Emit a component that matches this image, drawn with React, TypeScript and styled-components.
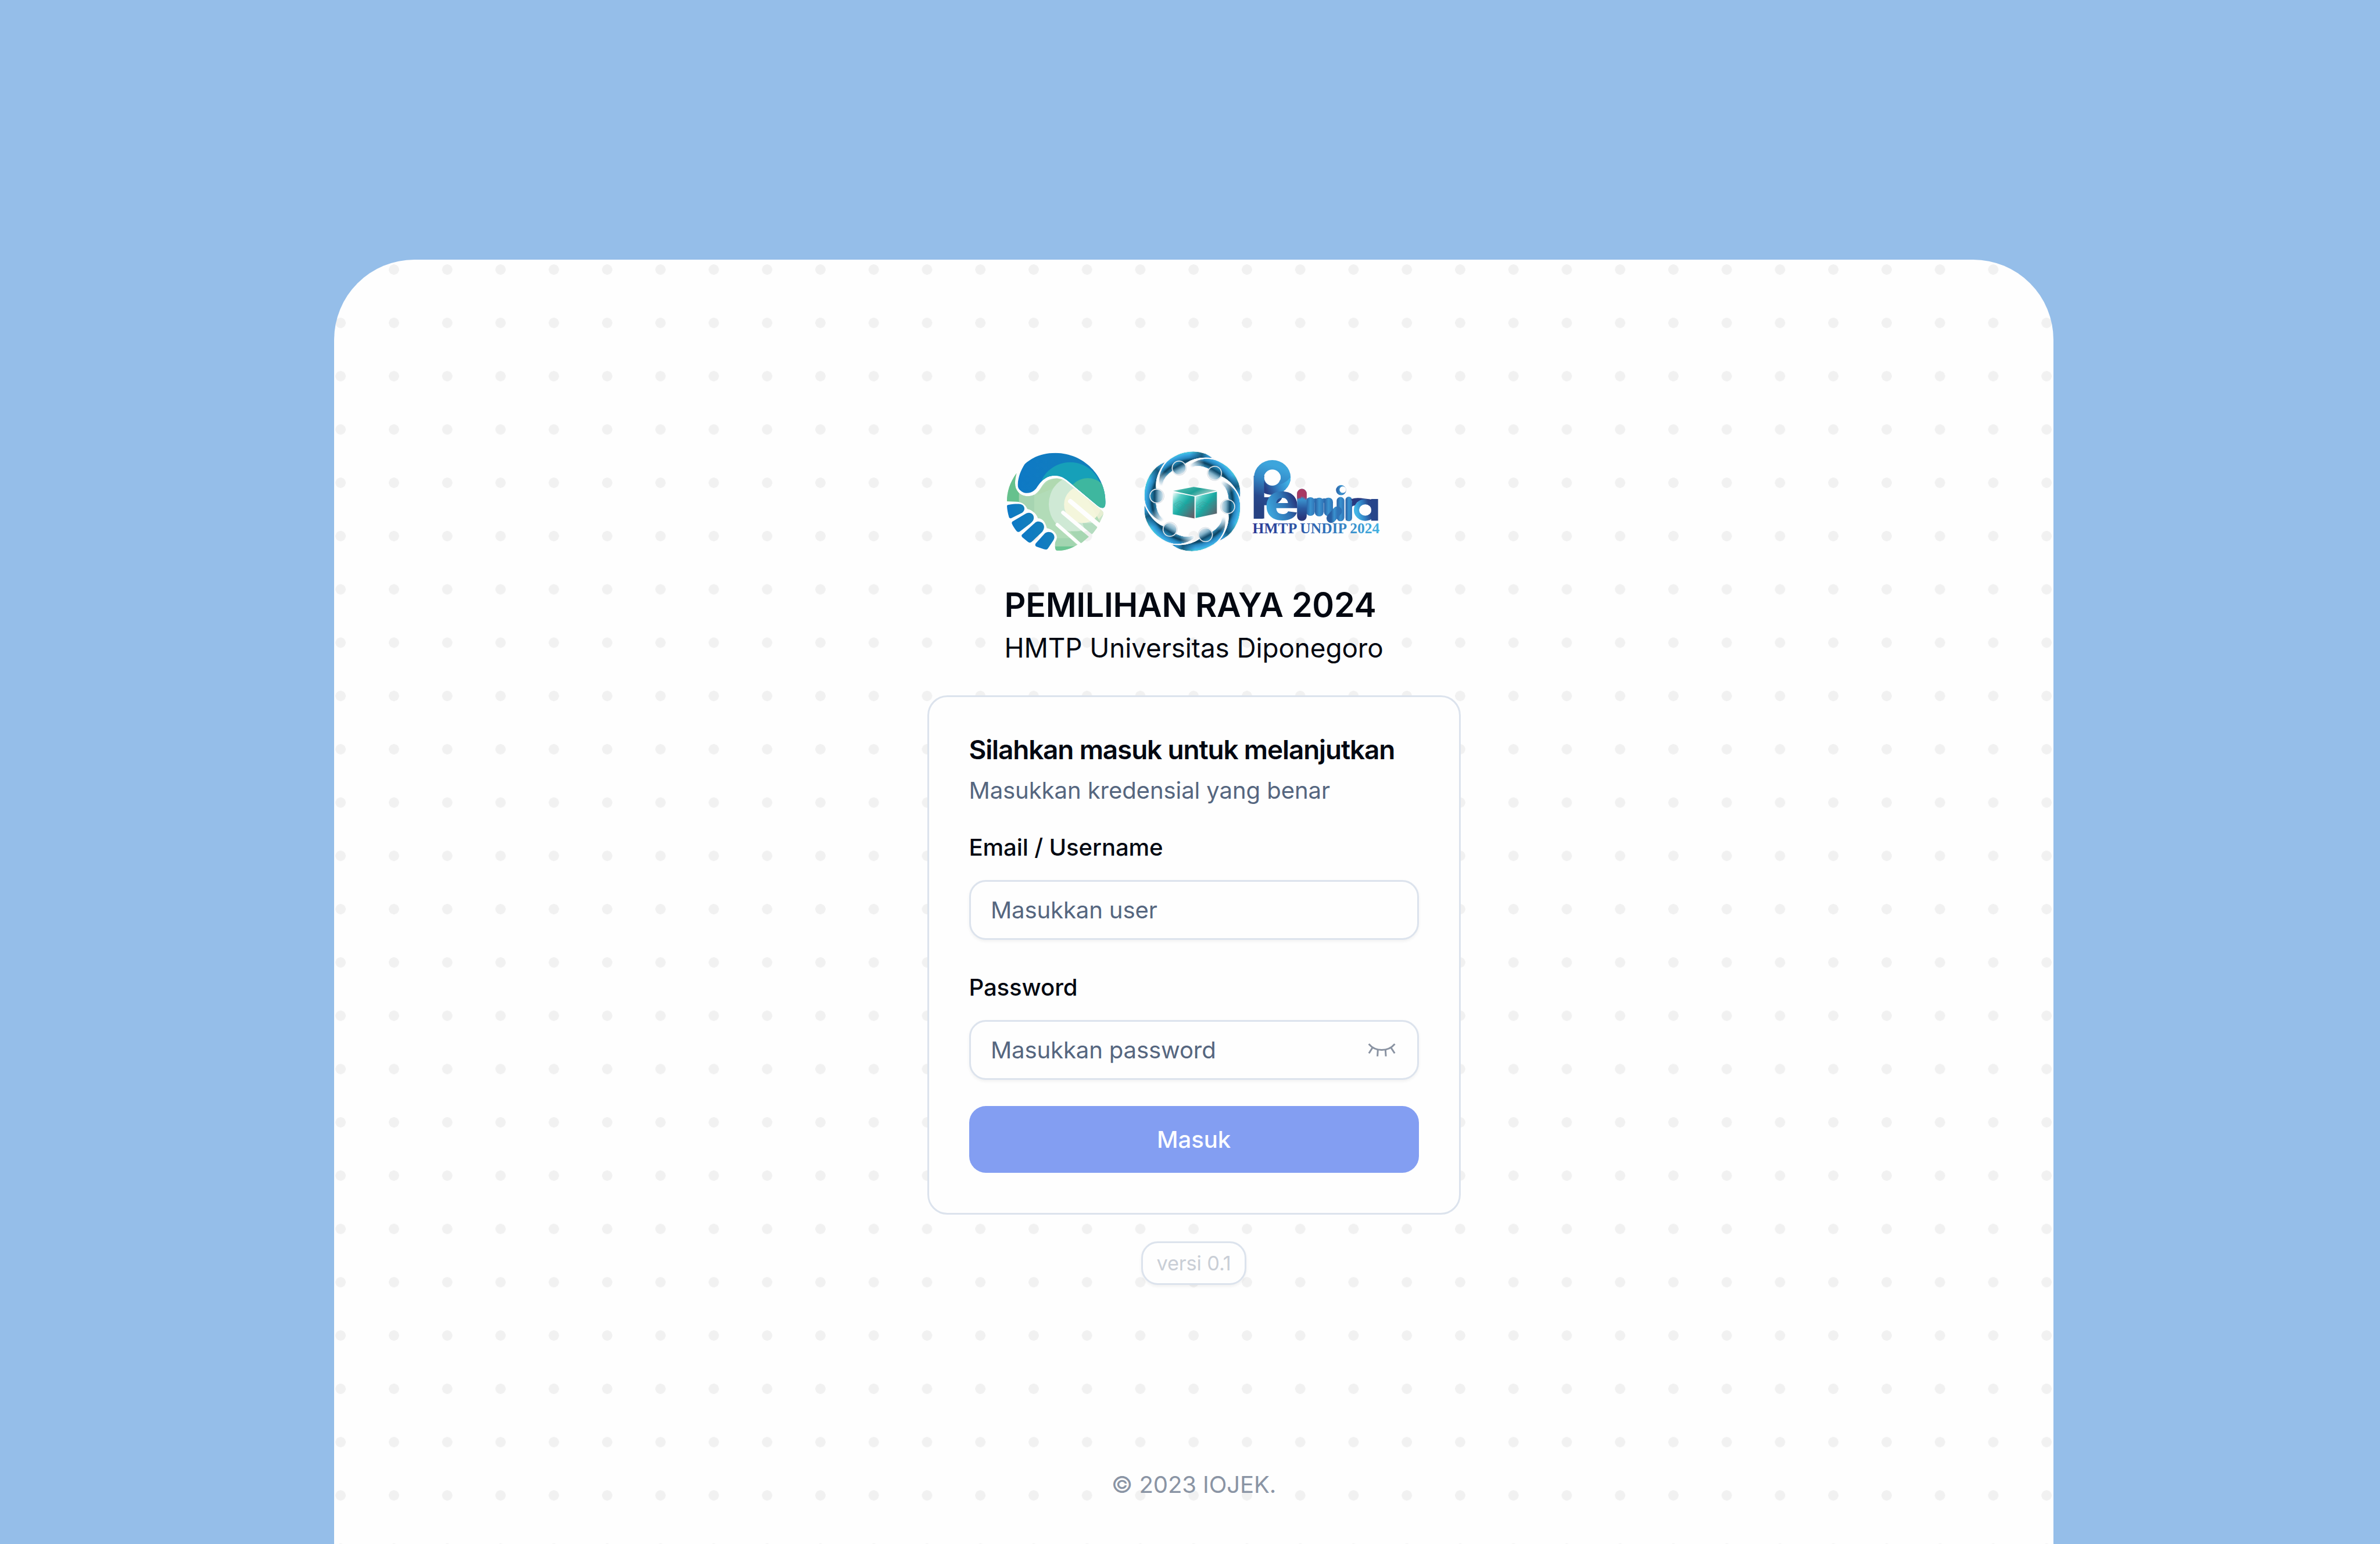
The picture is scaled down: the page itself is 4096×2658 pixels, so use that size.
import React from "react";
import styled, { createGlobalStyle } from "styled-components";

const sans = `Inter, "Noto Sans", "Liberation Sans", sans-serif`;

const GlobalStyle = createGlobalStyle`
  *, *::before, *::after { box-sizing: border-box; }
  html, body { margin: 0; padding: 0; }
  body {
    background: #95bee9;
    font-family: ${sans};
    color: #030811;
    overflow: hidden;
  }
`;

const Page = styled.div`
  height: 100vh;
  padding: 447px 0 0 575px;
  background: #95bee9;
  overflow: hidden;
`;

const Panel = styled.main`
  display: flex;
  flex-direction: column;
  align-items: center;
  width: 2959px;
  height: 100%;
  padding-top: 328px;
  border-radius: 138px 138px 0 0;
  background-color: #fefefe;
  background-image: radial-gradient(circle, #f1f1f1 8.5px, rgba(241, 241, 241, 0) 9px);
  background-size: 91.755px 91.755px;
  background-position: -34.7px -28.8px;
`;

const LogoRow = styled.div`
  display: flex;
  gap: 59px;
  height: 176.3px;
`;

const Mark = styled.svg<{ $w: number }>`
  display: block;
  width: ${(p) => p.$w}px;
  height: 176.3px;
  overflow: visible;
`;

const Heading = styled.header`
  display: flex;
  flex-direction: column;
  width: 652px;
  margin-top: 50px;
`;

const Title = styled.h1`
  margin: 0;
  font-size: 57.35px;
  line-height: 80px;
  font-weight: 600;
  letter-spacing: -0.28px;
  white-space: nowrap;
`;

const Subtitle = styled.p`
  margin: 0;
  font-size: 45.88px;
  line-height: 69px;
  letter-spacing: -0.12px;
  white-space: nowrap;
`;

const Card = styled.section`
  display: flex;
  flex-direction: column;
  width: 918px;
  height: 894px;
  margin-top: 47px;
  padding: 68px 69px;
  border: 3px solid #dce3ed;
  border-radius: 34.4px;
  background: #fefefe;
`;

const CardTitle = styled.h2`
  margin: 0;
  font-size: 45.88px;
  line-height: 46px;
  font-weight: 600;
  letter-spacing: -1.13px;
  white-space: nowrap;
`;

const CardText = styled.p`
  margin: 18px 0 0;
  font-size: 40.14px;
  line-height: 57px;
  letter-spacing: -0.12px;
  color: #55667f;
`;

const Field = styled.div<{ $gap: number }>`
  display: flex;
  flex-direction: column;
  gap: 36px;
  margin-top: ${(p) => p.$gap}px;
`;

const Label = styled.label`
  font-size: 40.14px;
  line-height: 40px;
  font-weight: 500;
  letter-spacing: -0.13px;
`;

const InputBox = styled.div`
  display: flex;
  align-items: center;
  justify-content: space-between;
  height: 103px;
  padding: 0 37.4px 0 34.5px;
  border: 3px solid #dce3ed;
  border-radius: 28.7px;
  background: #fefefe;
  box-shadow: 0 2.9px 5.7px rgba(0, 0, 0, 0.05);
`;

const Input = styled.input`
  flex: 1;
  min-width: 0;
  padding: 0;
  border: 0;
  outline: 0;
  background: transparent;
  font-family: ${sans};
  font-size: 40.14px;
  line-height: 57px;
  letter-spacing: -0.16px;
  color: #030811;
  &::placeholder {
    color: #55667f;
    opacity: 1;
  }
`;

const EyeToggle = styled.button`
  display: flex;
  padding: 0;
  border: 0;
  background: transparent;
  color: #8a93a2;
`;

const Submit = styled.button`
  height: 115px;
  margin-top: 45px;
  padding: 0;
  border: 0;
  border-radius: 28.7px;
  background: #839ef2;
  color: #fcfdff;
  font-family: ${sans};
  font-size: 40.14px;
  font-weight: 500;
  letter-spacing: -0.1px;
`;

const Version = styled.div`
  display: flex;
  align-items: center;
  justify-content: center;
  width: 181px;
  height: 75px;
  margin-top: 46px;
  border: 3px solid #dce3ed;
  border-radius: 28.7px;
  background: #fefefe;
  box-shadow: 0 2.9px 5.7px rgba(0, 0, 0, 0.05);
  color: #c9ced6;
  font-size: 34.4px;
  letter-spacing: -0.15px;
  white-space: nowrap;
`;

const Footer = styled.footer`
  margin-top: 315px;
  font-size: 40.14px;
  line-height: 57px;
  letter-spacing: -0.15px;
  color: #8a94a4;
  white-space: nowrap;
`;

function HandshakeMark() {
  return (
    <Mark $w={170.4} viewBox="180 95 720 745">
      <defs>
        <clipPath id="hs-top">
          <path d="M310 195C370 140 450 114 535 115C740 118 895 280 897 470C897 500 890 514 876 515C862 516 850 508 840 500L615 312C580 283 540 272 490 285C440 300 415 340 395 370C370 405 325 415 295 400C270 385 258 370 258 345C262 290 280 240 310 195Z" />
        </clipPath>
        <clipPath id="hs-hand">
          <path d="M250 262C233 330 235 370 262 400C290 432 345 440 385 415C430 385 430 340 480 313C530 290 580 300 610 325L874 538C884 548 882 558 876 574L860 608L832 664L806 698L765 733L725 767L682 788C640 815 590 828 545 825C528 823 530 800 530 775C532 755 543 750 543 730C543 695 505 668 470 662C460 620 440 590 405 590C390 550 360 530 328 522C315 490 290 470 240 469L180 467C180 400 200 330 250 262Z" />
        </clipPath>
        <mask id="hs-slots" maskUnits="userSpaceOnUse" x="150" y="90" width="780" height="770">
          <rect x="150" y="90" width="780" height="770" fill="#fff" />
          <g stroke="#000" strokeLinecap="round" fill="none">
            <path d="M641 467L880 668" strokeWidth="34" />
            <path d="M588 549L810 735" strokeWidth="28" />
            <path d="M546 637L730 798" strokeWidth="25" />
          </g>
        </mask>
        <linearGradient id="hs-blue" x1="0" y1="0" x2="1" y2="0">
          <stop offset="0" stopColor="#0d78c6" />
          <stop offset="1" stopColor="#1480ba" />
        </linearGradient>
      </defs>
      <g clipPath="url(#hs-top)">
        <rect x="180" y="95" width="720" height="430" fill="url(#hs-blue)" />
        <ellipse cx="640" cy="400" rx="226" ry="217" fill="#16a0b9" />
        <ellipse cx="768" cy="448" rx="150" ry="150" fill="#3eb79f" />
      </g>
      <g mask="url(#hs-slots)">
        <g clipPath="url(#hs-hand)">
          <rect x="170" y="250" width="730" height="600" fill="#b2dcb8" />
          <rect x="170" y="250" width="98" height="240" fill="#66c18d" />
          <rect x="268" y="250" width="110" height="300" fill="#a6d4b1" />
          <path d="M400 420C430 360 470 320 540 300L600 310L500 380Z" fill="#b0d9b0" />
          <ellipse cx="665" cy="488" rx="181" ry="200" fill="#cfe9d5" />
          <ellipse cx="730" cy="490" rx="135" ry="135" fill="#f4f6dc" />
          <path d="M700 340L900 500V570L860 620Z" fill="#f2f3da" opacity="0.8" />
          <path d="M845 600L880 560V600L860 620Z" fill="#c5e4c8" />
          <path d="M730 625H850L800 710L740 660Z" fill="#b4dcc0" />
          <path d="M640 685H770L780 740L720 780Z" fill="#a6d6b2" />
          <path d="M520 735H640L700 800H520Z" fill="#a2d5b0" />
          <rect x="520" y="795" width="170" height="40" fill="#6bc592" />
        </g>
      </g>
      <g fill="url(#hs-blue)">
        <path d="M180 502C180 495 184 493 192 492C230 486 260 485 280 488C312 495 316 535 290 550L214 588C203 593 196 589 194 580C186 552 181 525 180 502Z" />
        <path d="M222 613L320 555C350 540 375 560 375 585C375 605 365 615 350 628L275 686C266 693 258 691 250 683C235 665 224 648 216 630C214 622 216 617 222 613Z" />
        <path d="M290 709L385 622C410 603 450 620 450 655C448 675 440 685 430 695L360 762C351 770 341 769 332 762L292 729C285 722 285 715 290 709Z" />
        <path d="M390 772L455 700C475 680 525 688 525 730C523 745 515 755 508 765L480 807C472 819 464 820 450 816L400 799C385 793 382 783 390 772Z" />
      </g>
    </Mark>
  );
}

const RING = [0, 60, 120, 180, 240, 300];

function Glyph(p: { ch: string; x: number; y: number; size: number; sx: number; fill: string }) {
  return (
    <text
      transform={`translate(${p.x} ${p.y}) scale(${p.sx} 1)`}
      fontFamily="Inter, sans-serif"
      fontWeight={800}
      fontSize={p.size}
      fill={p.fill}
    >
      {p.ch}
    </text>
  );
}

function PemiraMark() {
  return (
    <Mark $w={414.2} viewBox="100 95 1750 745">
      <defs>
        <radialGradient id="pm-body" gradientUnits="userSpaceOnUse" cx="10" cy="5" r="372">
          <stop offset="0.62" stopColor="#d3e1e9" />
          <stop offset="0.68" stopColor="#5f9bba" />
          <stop offset="0.75" stopColor="#2b7da6" />
          <stop offset="0.815" stopColor="#0b415f" />
          <stop offset="0.87" stopColor="#2585bd" />
          <stop offset="0.93" stopColor="#38a5e2" />
          <stop offset="1" stopColor="#48d5dc" />
        </radialGradient>
        <linearGradient id="pm-end" gradientUnits="userSpaceOnUse" x1="-20" y1="-345" x2="155" y2="-312">
          <stop offset="0" stopColor="#0b4668" stopOpacity="0" />
          <stop offset="0.5" stopColor="#083a56" stopOpacity="0.7" />
          <stop offset="0.8" stopColor="#2b8fcb" stopOpacity="0.6" />
          <stop offset="1" stopColor="#0c4c72" />
        </linearGradient>
        <linearGradient id="pm-tip" gradientUnits="userSpaceOnUse" x1="-228" y1="-115" x2="-195" y2="-215">
          <stop offset="0" stopColor="#f4f7fa" />
          <stop offset="1" stopColor="#f4f7fa" stopOpacity="0" />
        </linearGradient>
        <linearGradient id="pm-head" gradientUnits="userSpaceOnUse" x1="-125" y1="-290" x2="-70" y2="-190">
          <stop offset="0" stopColor="#2b9ed0" />
          <stop offset="0.35" stopColor="#0f4a6c" />
          <stop offset="0.6" stopColor="#7fb0c8" />
          <stop offset="1" stopColor="#f4f7fa" />
        </linearGradient>
        <linearGradient id="pm-top" x1="0" y1="0" x2="1" y2="0.4">
          <stop offset="0" stopColor="#d5f3ef" />
          <stop offset="0.3" stopColor="#3fb3a6" />
          <stop offset="0.6" stopColor="#1fa097" />
          <stop offset="1" stopColor="#a9cfc9" />
        </linearGradient>
        <linearGradient id="pm-left" x1="0" y1="0" x2="1" y2="1">
          <stop offset="0.02" stopColor="#f2fbfa" />
          <stop offset="0.25" stopColor="#55cdc4" />
          <stop offset="0.5" stopColor="#1aa9a2" />
          <stop offset="0.75" stopColor="#467c80" />
          <stop offset="1" stopColor="#6a5560" />
        </linearGradient>
        <linearGradient id="pm-p" gradientUnits="userSpaceOnUse" x1="1080" y1="210" x2="985" y2="520">
          <stop offset="0" stopColor="#3da5dc" />
          <stop offset="0.35" stopColor="#3386c5" />
          <stop offset="0.75" stopColor="#27498d" />
          <stop offset="1" stopColor="#264282" />
        </linearGradient>
        <linearGradient id="pm-fold" gradientUnits="userSpaceOnUse" x1="1180" y1="330" x2="1020" y2="400">
          <stop offset="0" stopColor="#3fb2e6" />
          <stop offset="0.45" stopColor="#3387c8" />
          <stop offset="1" stopColor="#283f86" />
        </linearGradient>
        <linearGradient id="pm-e" x1="0.1" y1="0.8" x2="0.9" y2="0.25">
          <stop offset="0.1" stopColor="#3da5dc" />
          <stop offset="0.55" stopColor="#2f74b5" />
          <stop offset="0.85" stopColor="#27397f" />
        </linearGradient>
        <linearGradient id="pm-v" x1="0" y1="0" x2="0" y2="1">
          <stop offset="0.35" stopColor="#3b8fcb" />
          <stop offset="0.6" stopColor="#2a5ca3" />
          <stop offset="0.9" stopColor="#29377c" />
        </linearGradient>
        <linearGradient id="pm-h" x1="0" y1="0" x2="1" y2="0">
          <stop offset="0" stopColor="#285fa3" />
          <stop offset="0.5" stopColor="#3a92cf" />
          <stop offset="1" stopColor="#2f73b6" />
        </linearGradient>
        <linearGradient id="pm-a" x1="0" y1="0.6" x2="1" y2="0.4">
          <stop offset="0" stopColor="#43b5e6" />
          <stop offset="0.45" stopColor="#2f78bd" />
          <stop offset="0.75" stopColor="#28478c" />
        </linearGradient>
        <linearGradient id="pm-cap" gradientUnits="userSpaceOnUse" x1="918" y1="0" x2="1842" y2="0">
          <stop offset="0" stopColor="#2b3a94" />
          <stop offset="0.35" stopColor="#2c55a6" />
          <stop offset="0.7" stopColor="#3583c4" />
          <stop offset="1" stopColor="#43b2e2" />
        </linearGradient>
        <clipPath id="pm-bowlclip">
          <ellipse cx="1062" cy="293" rx="133" ry="126" />
        </clipPath>
      </defs>

      <g transform="translate(480 467)">
        {RING.map((a) => (
          <g key={a} transform={`rotate(${a})`}>
            {["url(#pm-body)", "url(#pm-end)", "url(#pm-tip)"].map((fill) => (
              <path
                key={fill}
                d="M-242 -130C-250 -200 -219 -285 -130 -330C-50 -375 70 -385 155 -312C70 -322 5 -312 -45 -275C-75 -250 -110 -235 -140 -222C-180 -195 -206 -165 -214 -128C-218 -110 -239 -112 -242 -130Z"
                fill={fill}
                stroke="#f6f8fa"
                strokeWidth="5"
              />
            ))}
            <circle cx="-96" cy="-243" r="50" fill="url(#pm-head)" stroke="#f3f3f5" strokeWidth="6" />
            <circle cx="-96" cy="-243" r="54" fill="none" stroke="#9fb3c0" strokeWidth="1.5" />
          </g>
        ))}
      </g>

      <path d="M340 391L490 362L658 389L500 427Z" fill="url(#pm-top)" />
      <path d="M338 401L496 432V592L338 561Z" fill="url(#pm-left)" />
      <path d="M504 432L659 397V556L504 588Z" fill="url(#pm-left)" />
      <g fill="none" stroke="#4f7f82" strokeWidth="3" opacity="0.55">
        <path d="M345 490L390 465L430 495L490 480M345 495L395 530L430 500L490 515M365 495L390 480L412 498L390 515Z" />
        <path d="M512 500L555 470L600 490L655 465M512 520L560 528L600 498L655 495M530 505L555 485L580 498L556 515Z" />
      </g>

      <Glyph ch="P" x={905} y={592} size={430} sx={0.9} fill="#27498d" />
      <rect x="928" y="290" width="75" height="302" fill="url(#pm-p)" />
      <ellipse cx="1062" cy="293" rx="97" ry="90" fill="none" stroke="url(#pm-p)" strokeWidth="72" />
      <g clipPath="url(#pm-bowlclip)">
        <path d="M1002 315C1020 350 1060 365 1090 352C1140 340 1185 320 1200 275V430H1002Z" fill="url(#pm-fold)" />
      </g>
      <circle cx="1062" cy="294" r="59" fill="#fefefe" />

      <Glyph ch="e" x={1005} y={602} size={376} sx={1.12} fill="url(#pm-e)" />

      <Glyph ch="m" x={1300} y={560} size={205} sx={1} fill="#2f73b6" />
      <rect x="1307" y="437" width="64" height="136" rx="31" fill="url(#pm-h)" />
      <rect x="1371" y="440" width="64" height="137" rx="31" fill="url(#pm-h)" />
      <rect x="1437" y="440" width="66" height="134" rx="32" fill="url(#pm-h)" />
      <rect x="1242" y="376" width="70" height="234" rx="35" fill="url(#pm-v)" />
      <path d="M1242 456V411A35 35 0 0 1 1312 411V445L1304 458L1299 436L1292 452L1286 430L1278 446L1272 430L1266 450L1258 440L1252 452L1248 442Z" fill="#a93a63" />

      <rect x="1530" y="435" width="56" height="177" rx="28" fill="url(#pm-h)" />
      <path d="M1535 538L1490 590" stroke="url(#pm-h)" strokeWidth="68" strokeLinecap="round" />
      <circle cx="1562" cy="386" r="37" fill="url(#pm-h)" />
      <circle cx="1575" cy="382" r="24" fill="#fefefe" />

      <Glyph ch="r" x={1584} y={606} size={268} sx={0.85} fill="#28397f" />
      <rect x="1594" y="433" width="48" height="179" rx="24" fill="url(#pm-h)" />
      <path d="M1642 466C1680 450 1720 464 1785 470" stroke="#28397f" strokeWidth="32" fill="none" />
      <ellipse cx="1738" cy="530" rx="64" ry="60" fill="none" stroke="url(#pm-a)" strokeWidth="38" />
      <rect x="1781" y="450" width="50" height="158" fill="#27458a" />

      <text
        x="918"
        y="699"
        fontFamily="'Liberation Serif', serif"
        fontWeight={700}
        fontSize="103"
        textLength="924"
        lengthAdjust="spacingAndGlyphs"
        fill="url(#pm-cap)"
      >
        HMTP UNDIP 2024
      </text>
    </Mark>
  );
}

const EyeSvg = styled.svg`
  display: block;
  width: 46.2px;
  height: 23px;
  overflow: visible;
`;

function ClosedEye() {
  return (
    <EyeSvg viewBox="143 100 195 97">
      <g fill="none" stroke="currentColor" strokeWidth="12.5">
        <path d="M146 105C195 163 285 163 335 105" />
        <path d="M174 130L147 173M212 146L209 195M267 146L270 195M306 130L334 173" />
      </g>
    </EyeSvg>
  );
}

export default function App() {
  return (
    <>
      <GlobalStyle />
      <Page>
        <Panel>
          <LogoRow>
            <HandshakeMark />
            <PemiraMark />
          </LogoRow>
          <Heading>
            <Title>PEMILIHAN RAYA 2024</Title>
            <Subtitle>HMTP Universitas Diponegoro</Subtitle>
          </Heading>
          <Card>
            <CardTitle>Silahkan masuk untuk melanjutkan</CardTitle>
            <CardText>Masukkan kredensial yang benar</CardText>
            <Field $gap={50}>
              <Label htmlFor="user">Email / Username</Label>
              <InputBox>
                <Input id="user" placeholder="Masukkan user" />
              </InputBox>
            </Field>
            <Field $gap={62}>
              <Label htmlFor="password">Password</Label>
              <InputBox>
                <Input id="password" type="password" placeholder="Masukkan password" />
                <EyeToggle type="button" aria-label="Password">
                  <ClosedEye />
                </EyeToggle>
              </InputBox>
            </Field>
            <Submit type="button">Masuk</Submit>
          </Card>
          <Version>versi 0.1</Version>
          <Footer>© 2023 IOJEK.</Footer>
        </Panel>
      </Page>
    </>
  );
}
